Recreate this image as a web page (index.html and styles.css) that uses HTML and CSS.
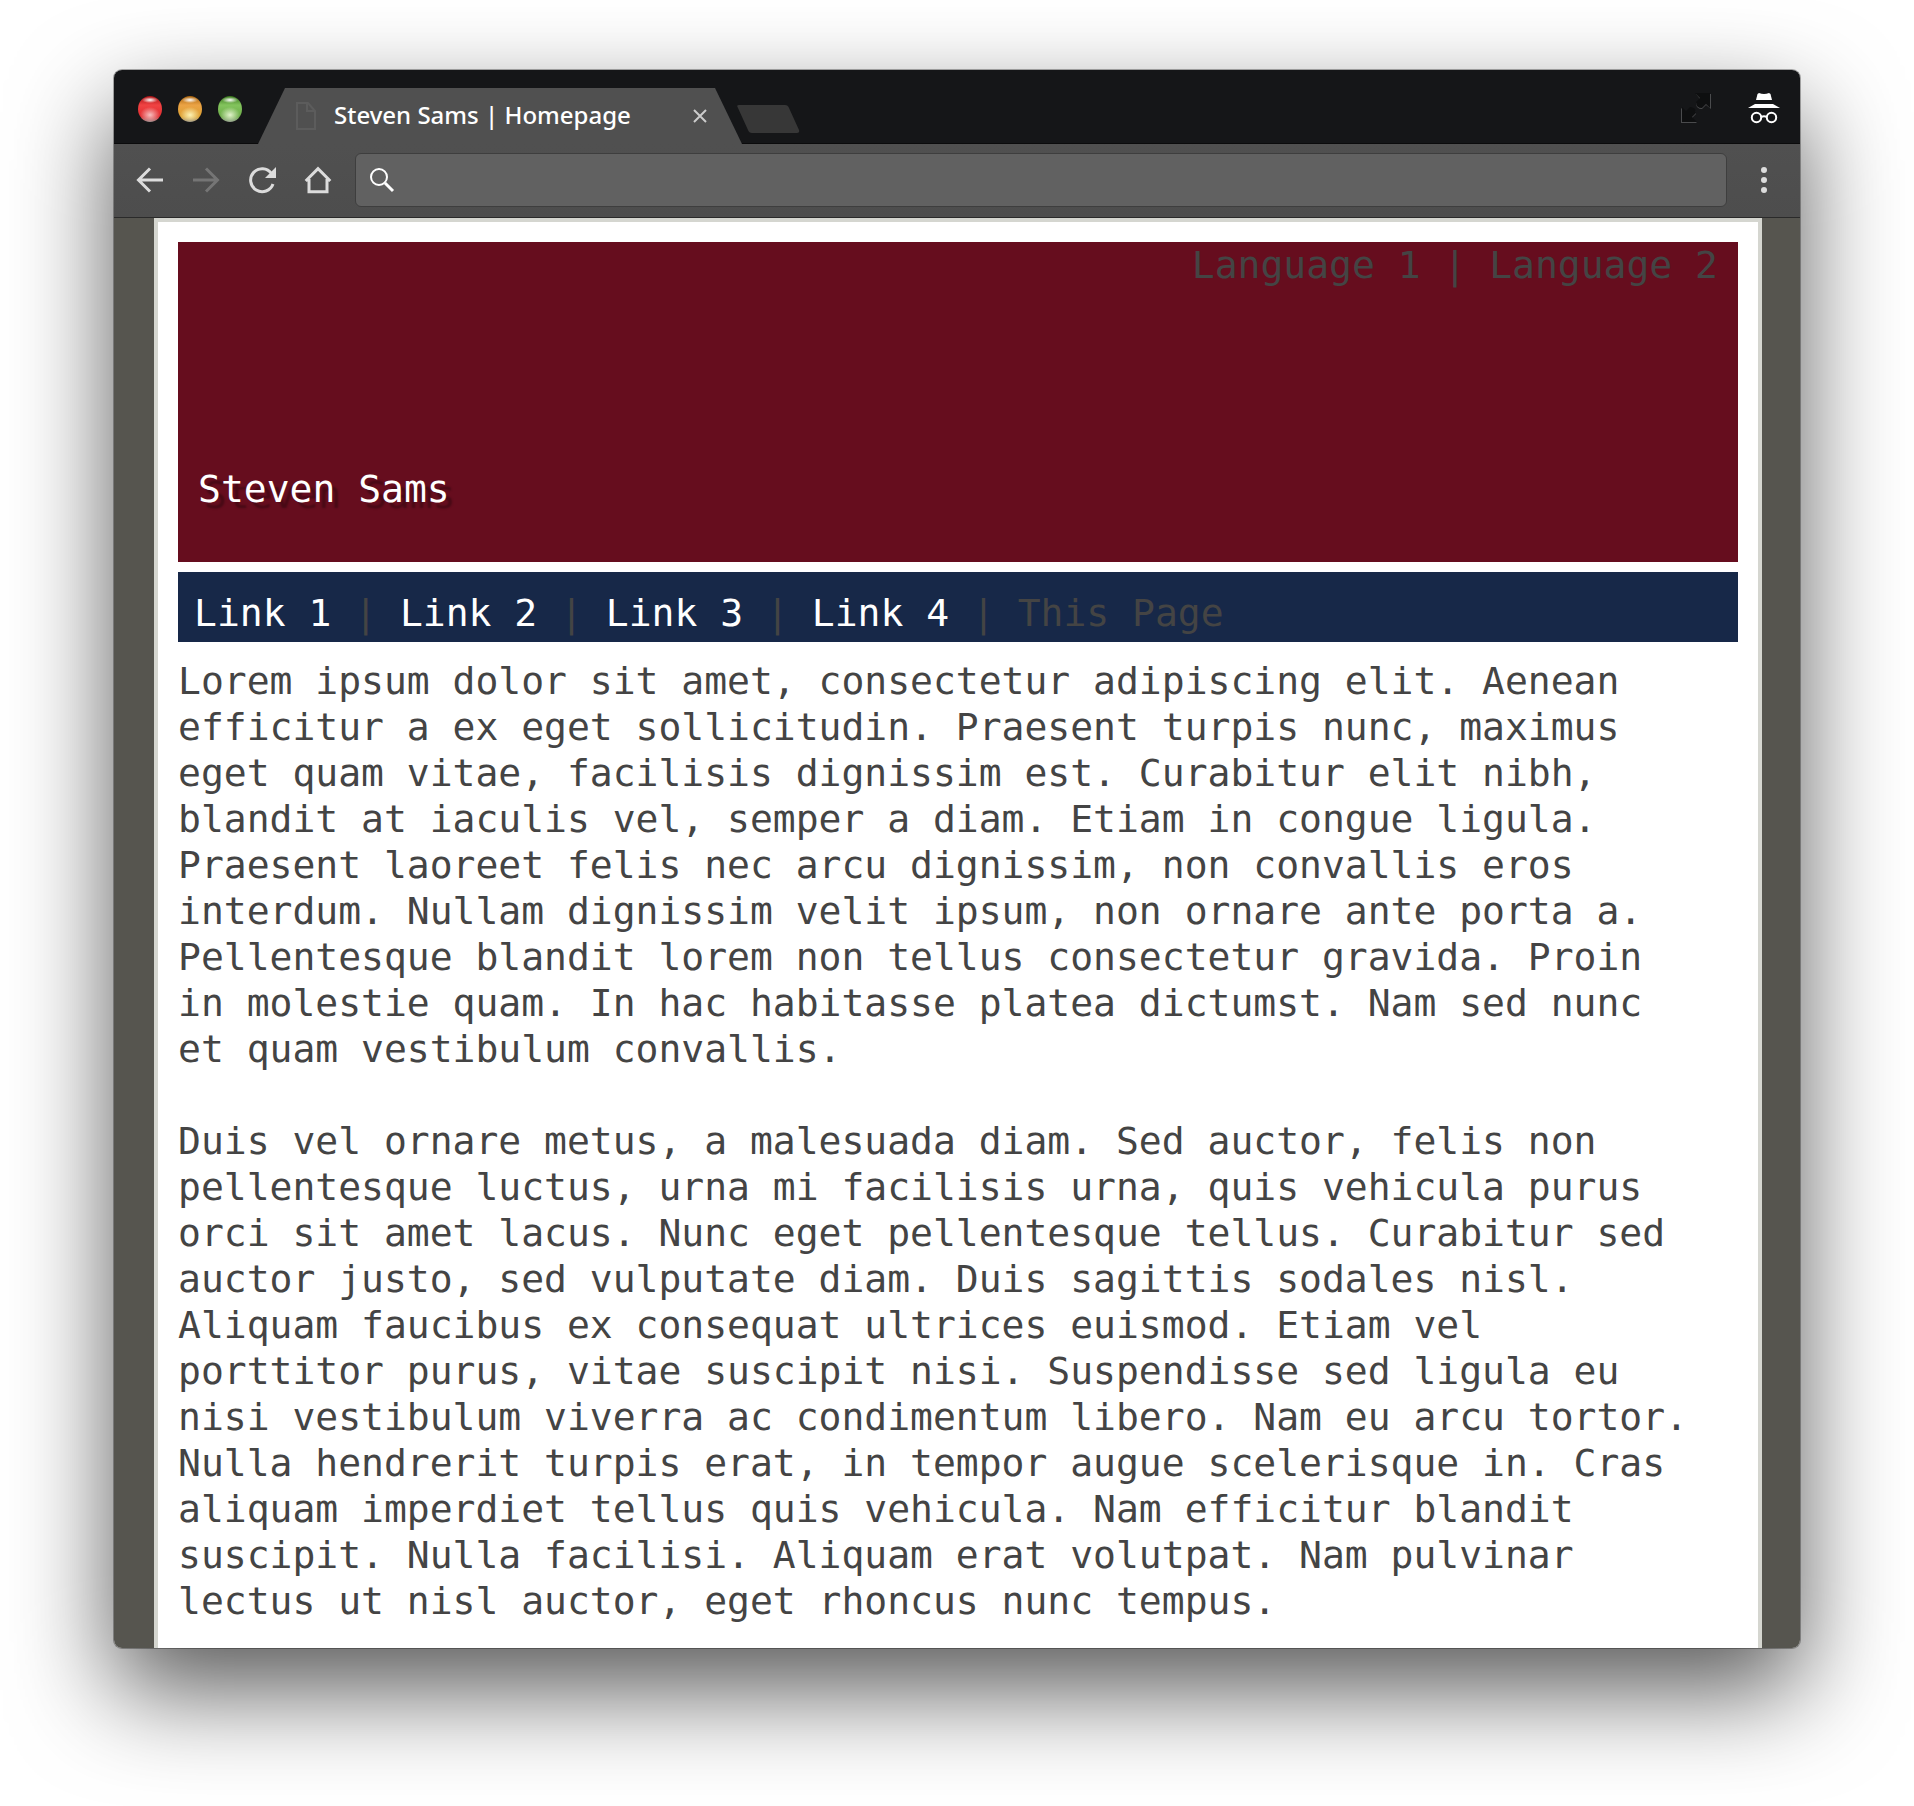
FILE: index.html
```html
<!DOCTYPE html>
<html lang="en">
<head>
<meta charset="utf-8">
<title>Steven Sams | Homepage</title>
<link rel="stylesheet" href="styles.css">
</head>
<body>
<div class="window">
  <div class="tab-strip">
    <div class="lights">
      <button class="light light-red" aria-label="Close window"></button>
      <button class="light light-amber" aria-label="Minimize window"></button>
      <button class="light light-green" aria-label="Zoom window"></button>
    </div>
    <div class="tab">
      <svg class="tab-file" viewBox="0 0 20 28" aria-hidden="true"><path d="M1 1h11l7 8v18H1zM11 1v8h8"/></svg>
      <span class="tab-title">Steven Sams | Homepage</span>
      <button class="tab-close" aria-label="Close tab"><svg viewBox="0 0 14 14"><path d="M1 1l12 12M13 1L1 13"/></svg></button>
    </div>
    <button class="new-tab" aria-label="New tab"><svg viewBox="0 0 64 30"><path d="M3 1h46q3 0 4 3l10 22q1 3-2 3H16q-3 0-4-3L2 4q-2-3 1-3z"/></svg></button>
    <div class="strip-end">
      <svg class="fullscreen" viewBox="0 0 30 30" aria-hidden="true">
        <path class="fs-edge" d="M15 1h15v15l-5-4-4 4q-6 0-6-6l4-4zM16 30H0V15l5 4 4-4q6 0 6 6l-4 4z"/>
        <path class="fs-fill" d="M14 0h15v15l-4-4-4 4q-6 0-6-6l4-4zM16 29H1V14l4 4 4-4q6 0 6 6l-4 4z"/>
      </svg>
      <svg class="incognito" viewBox="0 0 32 30" aria-hidden="true">
        <path d="M11 0q5 2 10 0l1.500 1L24 7H8l1.500-6zM7 11h18l7 4H0z"/>
        <g fill="none" stroke="#fff" stroke-width="2"><circle cx="8.500" cy="24.500" r="4.700"/><circle cx="23.500" cy="24.500" r="4.700"/><path d="M13 24q3-1.500 6 0"/></g>
      </svg>
    </div>
  </div>

  <div class="toolbar">
    <div class="tools">
      <button class="tool" aria-label="Back"><svg viewBox="0 0 26 26"><path d="M26 13H2M13 1.500L1.500 13 13 24.500"/></svg></button>
      <button class="tool tool-off" aria-label="Forward"><svg viewBox="0 0 26 26"><path d="M0 13h24M13 1.500L24.500 13 13 24.500"/></svg></button>
      <button class="tool" aria-label="Reload"><svg viewBox="0 0 26 26"><path d="M22.500 6.500A11.500 11.500 0 1 0 24 17"/><path class="solid" d="M27 0v11H16z"/></svg></button>
      <button class="tool" aria-label="Home"><svg viewBox="0 0 26 26"><path d="M.700 14L13 1.700 25.300 14M4 12v12.700h18V12"/></svg></button>
    </div>
    <label class="address">
      <svg viewBox="0 0 24 24" aria-hidden="true"><circle cx="9" cy="9" r="8"/><path d="M15 15l8 8" stroke-width="3"/></svg>
      <input type="text" aria-label="Address and search">
    </label>
    <button class="tool menu" aria-label="Menu"><svg viewBox="0 0 26 26"><circle cx="13" cy="3" r="3"/><circle cx="13" cy="13" r="3"/><circle cx="13" cy="23" r="3"/></svg></button>
  </div>

  <div class="viewport">
    <div class="page">
      <header class="banner">
        <div class="languages">Language 1 | Language 2</div>
        <h1 class="site-title">Steven Sams</h1>
      </header>
      <nav class="site-nav">
        <a href="#link-1">Link 1</a> | <a href="#link-2">Link 2</a> | <a href="#link-3">Link 3</a> | <a href="#link-4">Link 4</a> | This Page
      </nav>
      <main class="copy">
        <p>Lorem ipsum dolor sit amet, consectetur adipiscing elit. Aenean efficitur a ex eget sollicitudin. Praesent turpis nunc, maximus eget quam vitae, facilisis dignissim est. Curabitur elit nibh, blandit at iaculis vel, semper a diam. Etiam in congue ligula. Praesent laoreet felis nec arcu dignissim, non convallis eros interdum. Nullam dignissim velit ipsum, non ornare ante porta a. Pellentesque blandit lorem non tellus consectetur gravida. Proin in molestie quam. In hac habitasse platea dictumst. Nam sed nunc et quam vestibulum convallis.</p>
        <p>Duis vel ornare metus, a malesuada diam. Sed auctor, felis non pellentesque luctus, urna mi facilisis urna, quis vehicula purus orci sit amet lacus. Nunc eget pellentesque tellus. Curabitur sed auctor justo, sed vulputate diam. Duis sagittis sodales nisl. Aliquam faucibus ex consequat ultrices euismod. Etiam vel porttitor purus, vitae suscipit nisi. Suspendisse sed ligula eu nisi vestibulum viverra ac condimentum libero. Nam eu arcu tortor. Nulla hendrerit turpis erat, in tempor augue scelerisque in. Cras aliquam imperdiet tellus quis vehicula. Nam efficitur blandit suscipit. Nulla facilisi. Aliquam erat volutpat. Nam pulvinar lectus ut nisl auctor, eget rhoncus nunc tempus.</p>
      </main>
    </div>
  </div>
</div>
</body>
</html>
```

FILE: styles.css
```css
* { box-sizing: border-box; }

body {
  margin: 0;
  padding: 70px 114px 158px;
  background: #fff;
}

button {
  padding: 0;
  border: 0;
  background: none;
}

svg {
  display: block;
  overflow: visible;
}

.window {
  border-radius: 8px;
  box-shadow: 0 0 0 1px rgba(0, 0, 0, .3), 0 42px 100px rgba(0, 0, 0, .66);
}

/* Tab strip */

.tab-strip {
  display: flex;
  align-items: flex-end;
  height: 74px;
  background: #151618;
  border-radius: 8px 8px 0 0;
  box-shadow: inset 0 -1px #0b0b0c;
}

.lights {
  display: flex;
  gap: 16px;
  padding: 0 16px 22px 24px;
}

.light {
  width: 24px;
  height: 26px;
  border-radius: 50%;
}

.light-red {
  background:
    radial-gradient(ellipse 8px 3px at 50% 4px, #fff, transparent),
    radial-gradient(ellipse 10px 8px at 50% 19px, #f7c0c0, transparent),
    linear-gradient(#a81214, #f04343 35%, #e02c30 80%, #8f8585);
}

.light-amber {
  background:
    radial-gradient(ellipse 8px 3px at 50% 4px, #fff, transparent),
    radial-gradient(ellipse 10px 8px at 50% 19px, #fdf3b5, transparent),
    linear-gradient(#a8620c, #eba345 35%, #dca132 80%, #8f8a80);
}

.light-green {
  background:
    radial-gradient(ellipse 8px 3px at 50% 4px, #fff, transparent),
    radial-gradient(ellipse 10px 8px at 50% 19px, #e2f3cc, transparent),
    linear-gradient(#38761c, #83c45d 35%, #6cab48 80%, #858f80);
}

.tab {
  display: flex;
  align-items: center;
  width: 484px;
  height: 56px;
  padding: 0 35px 0 38px;
  background: #505050;
  clip-path: polygon(27px 0, calc(100% - 27px) 0, 100% 100%, 0 100%);
}

.tab-file {
  width: 20px;
  height: 28px;
  fill: none;
  stroke: #5c5c5c;
  stroke-width: 2;
}

.tab-title {
  flex: 1;
  padding: 0 0 2px 18px;
  color: #fff;
  font: 500 24px/32px "Noto Sans", sans-serif;
  white-space: nowrap;
}

.tab-close {
  width: 14px;
  height: 14px;
  stroke: #ccc;
  stroke-width: 2;
}

.new-tab {
  width: 64px;
  height: 30px;
  margin: 0 0 10px -6px;
  fill: #373737;
}

.strip-end {
  display: flex;
  gap: 37px;
  margin-left: auto;
  padding: 0 20px 21px 0;
}

.fullscreen {
  width: 30px;
  height: 30px;
}

.fs-edge { fill: #4a4b4d; }
.fs-fill { fill: #0e0f10; }

.incognito {
  width: 32px;
  height: 30px;
  fill: #fff;
}

/* Toolbar */

.toolbar {
  display: flex;
  align-items: center;
  gap: 24px;
  height: 74px;
  padding: 0 23px 1px;
  background: linear-gradient(#505050, #4d4d4d);
  border-bottom: 1px solid #2a2a2a;
}

.tools {
  display: flex;
  gap: 30px;
}

.tool {
  width: 26px;
  height: 26px;
  fill: none;
  stroke: #dcdcdc;
  stroke-width: 3;
}

.tool-off { stroke: #757575; }

.tool .solid {
  fill: #dcdcdc;
  stroke: none;
}

.menu {
  fill: #dcdcdc;
  stroke: none;
}

.address {
  display: flex;
  flex: 1;
  align-items: center;
  gap: 12px;
  height: 54px;
  padding: 0 14px;
  background: #616161;
  border: 1px solid #3e3e3e;
  border-radius: 6px;
}

.address svg {
  width: 24px;
  height: 24px;
  fill: none;
  stroke: #fff;
  stroke-width: 2;
}

.address input {
  flex: 1;
  padding: 0;
  border: 0;
  outline: 0;
  background: none;
  color: #fff;
  font: 24px/32px "Noto Sans", sans-serif;
}

/* Page */

.viewport {
  padding: 0 38px 0 40px;
  background: #56554f;
  border-radius: 0 0 8px 8px;
}

.page {
  padding: 20px 20px 24px;
  background: #fff;
  border: 4px solid #d5d6d0;
  border-bottom: 0;
  color: #444;
  font: 38px/46px "DejaVu Sans Mono", monospace;
}

.banner {
  display: flex;
  flex-direction: column;
  justify-content: space-between;
  height: 320px;
  padding: 0 20px 50px;
  background: #660d1e;
}

.languages { text-align: right; }

.site-title {
  margin: 0;
  color: #fff;
  font: inherit;
  text-shadow: 6px 6px 2px rgba(0, 0, 0, .3);
}

.site-nav {
  margin-top: 10px;
  padding: 18px 16px 6px;
  background: #172848;
}

.site-nav a {
  color: #fff;
  text-decoration: none;
}

.copy { padding: 16px 36px 0 0; }

.copy p { margin: 0; }

.copy p + p { margin-top: 46px; }
```
